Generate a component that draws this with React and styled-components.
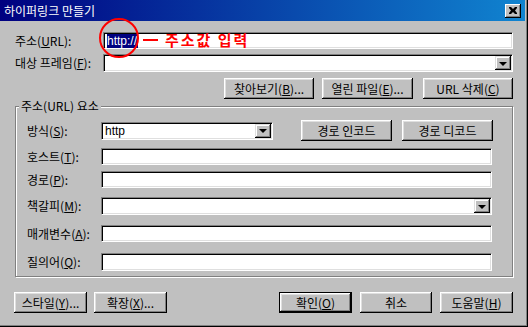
import React from 'react';
import styled, { createGlobalStyle } from 'styled-components';

const GlobalStyle = createGlobalStyle`
  html, body {
    margin: 0;
    padding: 0;
    background: #c0c0c0;
  }
  body {
    font-family: "Noto Sans CJK KR", "Liberation Sans", sans-serif;
    font-size: 12px;
    color: #000;
  }
  u {
    text-underline-offset: 1px;
  }
`;

const Window = styled.div`
  position: relative;
  width: 528px;
  height: 327px;
  box-sizing: border-box;
  background: #c0c0c0;
  border-right: 1px solid #000;
  border-bottom: 1px solid #000;
  box-shadow: inset -1px -1px #808080;
  padding-right: 2px;
  display: flex;
  flex-direction: column;
  overflow: hidden;
`;

const TitleBar = styled.div`
  height: 21px;
  flex: none;
  display: flex;
  align-items: center;
  justify-content: space-between;
  padding: 0 4px 0 4px;
  background: linear-gradient(to right, #000080, #1084d0);
  color: #fff;
  line-height: 1;
`;

const CloseBtn = styled.div`
  width: 16px;
  height: 14px;
  box-sizing: border-box;
  background: #c0c0c0;
  box-shadow: inset -1px -1px #000, inset 1px 1px #fff, inset -2px -2px #808080;
  display: flex;
  align-items: center;
  justify-content: center;
`;

const Body = styled.div`
  flex: 1;
  display: flex;
  flex-direction: column;
  padding: 11px 12px 0 15px;
`;

const Row = styled.div`
  display: flex;
  align-items: center;
  height: ${p => p.h || 18}px;
  margin-top: ${p => p.mt || 0}px;
`;

const Label = styled.div`
  width: ${p => p.w}px;
  flex: none;
  white-space: nowrap;
  line-height: 1;
`;

const Field = styled.div`
  position: relative;
  flex: ${p => (p.w ? 'none' : 1)};
  width: ${p => (p.w ? `${p.w}px` : 'auto')};
  height: ${p => p.h || 17}px;
  box-sizing: border-box;
  background: #fff;
  border-top: 1px solid #808080;
  border-left: 1px solid #808080;
  border-right: 1px solid #fff;
  border-bottom: 1px solid #fff;
  box-shadow: inset 1px 1px #000, inset -1px -1px #dfdfdf;
  display: flex;
  align-items: center;
  padding: 0 2px 0 3px;
  line-height: 1;
`;

const Selected = styled.span`
  background: #000080;
  color: #fff;
  padding: 1px 1px 1px 0;
  font-family: "Liberation Sans", sans-serif;
`;

const FieldText = styled.span`
  flex: 1;
  font-family: "Liberation Sans", sans-serif;
`;

const DropBtn = styled.div`
  position: absolute;
  right: 1px;
  top: 1px;
  bottom: 1px;
  width: 16px;
  background: #c0c0c0;
  box-shadow: inset -1px -1px #000, inset 1px 1px #dfdfdf, inset -2px -2px #808080, inset 2px 2px #fff;
  display: flex;
  align-items: center;
  justify-content: center;
`;

const Arrow = styled.div`
  width: 0;
  height: 0;
  border-left: 4px solid transparent;
  border-right: 4px solid transparent;
  border-top: 4px solid #000;
  margin-top: 1px;
`;

const ButtonRow = styled.div`
  display: flex;
  justify-content: ${p => p.justify || 'flex-end'};
  gap: ${p => p.gap || 9}px;
  margin-top: ${p => p.mt || 0}px;
  margin-left: ${p => p.ml || 0}px;
`;

const Group = styled.div`
  display: flex;
  gap: ${p => p.gap || 8}px;
  margin-left: ${p => p.ml || 0}px;
`;

const Button = styled.button`
  width: ${p => p.w || 73}px;
  height: 21px;
  flex: none;
  box-sizing: border-box;
  padding: 0;
  margin-left: ${p => p.ml || 0}px;
  background: #c0c0c0;
  border: ${p => (p.primary ? '1px solid #000' : 'none')};
  box-shadow: inset -1px -1px #000, inset 1px 1px #fff, inset -2px -2px #808080, inset 2px 2px #dfdfdf;
  font: inherit;
  color: #000;
  line-height: 1;
  white-space: nowrap;
`;

const GroupBox = styled.div`
  position: relative;
  margin-top: ${p => p.mt || 0}px;
  border: 1px solid #808080;
  box-shadow: inset 1px 1px #fff, 1px 1px #fff;
  padding: 13px 20px 5px 11px;
  display: flex;
  flex-direction: column;
`;

const Legend = styled.div`
  position: absolute;
  top: -7px;
  left: 3px;
  padding: 0 2px;
  background: #c0c0c0;
  line-height: 1;
`;

const Circle = styled.div`
  position: absolute;
  left: 99px;
  top: 18px;
  width: 40px;
  height: 40px;
  box-sizing: border-box;
  border: 2px solid #ff0000;
  border-radius: 50%;
`;

const Pointer = styled.div`
  position: absolute;
  left: 143px;
  top: 39px;
  width: 15px;
  height: 2px;
  background: #ff0000;
`;

const Note = styled.div`
  position: absolute;
  left: 165px;
  top: 32px;
  color: #ff0000;
  font-weight: bold;
  font-size: 15px;
  letter-spacing: 2px;
  line-height: 1;
`;

function Combo({ w, h, children }) {
  return (
    <Field w={w} h={h}>
      <FieldText>{children}</FieldText>
      <DropBtn>
        <Arrow />
      </DropBtn>
    </Field>
  );
}

export default function App() {
  return (
    <>
      <GlobalStyle />
      <Window>
        <TitleBar>
          <span>하이퍼링크 만들기</span>
          <CloseBtn>
            <svg width="8" height="7" viewBox="0 0 8 7">
              <path d="M0 0h2l2 2 2-2h2v1L6 3.5 8 6v1H6L4 5 2 7H0V6l2-2.5L0 1z" fill="#000" />
            </svg>
          </CloseBtn>
        </TitleBar>
        <Body>
          <Row h={17}>
            <Label w={88}>주소(<u>U</u>RL):</Label>
            <Field>
              <Selected>http://</Selected>
            </Field>
          </Row>
          <Row h={18} mt={5}>
            <Label w={88}>대상 프레임(<u>F</u>):</Label>
            <Combo h={18} />
          </Row>
          <ButtonRow mt={6}>
            <Button w={90}>찾아보기(<u>B</u>)...</Button>
            <Button w={91} ml={-1}>열린 파일(<u>E</u>)...</Button>
            <Button w={90} ml={1}>URL 삭제(<u>C</u>)</Button>
          </ButtonRow>
          <GroupBox mt={7}>
            <Legend>주소(URL) 요소</Legend>
            <Row h={21}>
              <Label w={74}>방식(<u>S</u>):</Label>
              <Combo w={172} h={18}>http</Combo>
              <ButtonRow gap={10} ml={28}>
                <Button w={91}>경로 인코드</Button>
                <Button w={91}>경로 디코드</Button>
              </ButtonRow>
            </Row>
            <Row h={17} mt={7}>
              <Label w={74}>호스트(<u>T</u>):</Label>
              <Field />
            </Row>
            <Row h={17} mt={6}>
              <Label w={74}>경로(<u>P</u>):</Label>
              <Field />
            </Row>
            <Row h={18} mt={9}>
              <Label w={74}>책갈피(<u>M</u>):</Label>
              <Combo h={18} />
            </Row>
            <Row h={17} mt={10}>
              <Label w={74}>매개변수(<u>A</u>):</Label>
              <Field />
            </Row>
            <Row h={18} mt={11}>
              <Label w={74}>질의어(<u>Q</u>):</Label>
              <Field h={18} />
            </Row>
          </GroupBox>
          <ButtonRow justify="space-between" mt={15}>
            <Group gap={7} ml={-1}>
              <Button>스타일(<u>Y</u>)...</Button>
              <Button>확장(<u>X</u>)...</Button>
            </Group>
            <Group gap={8}>
              <Button primary>확인(<u>O</u>)</Button>
              <Button w={72}>취소</Button>
              <Button>도움말(<u>H</u>)</Button>
            </Group>
          </ButtonRow>
        </Body>
        <Circle />
        <Pointer />
        <Note>주소값 입력</Note>
      </Window>
    </>
  );
}
